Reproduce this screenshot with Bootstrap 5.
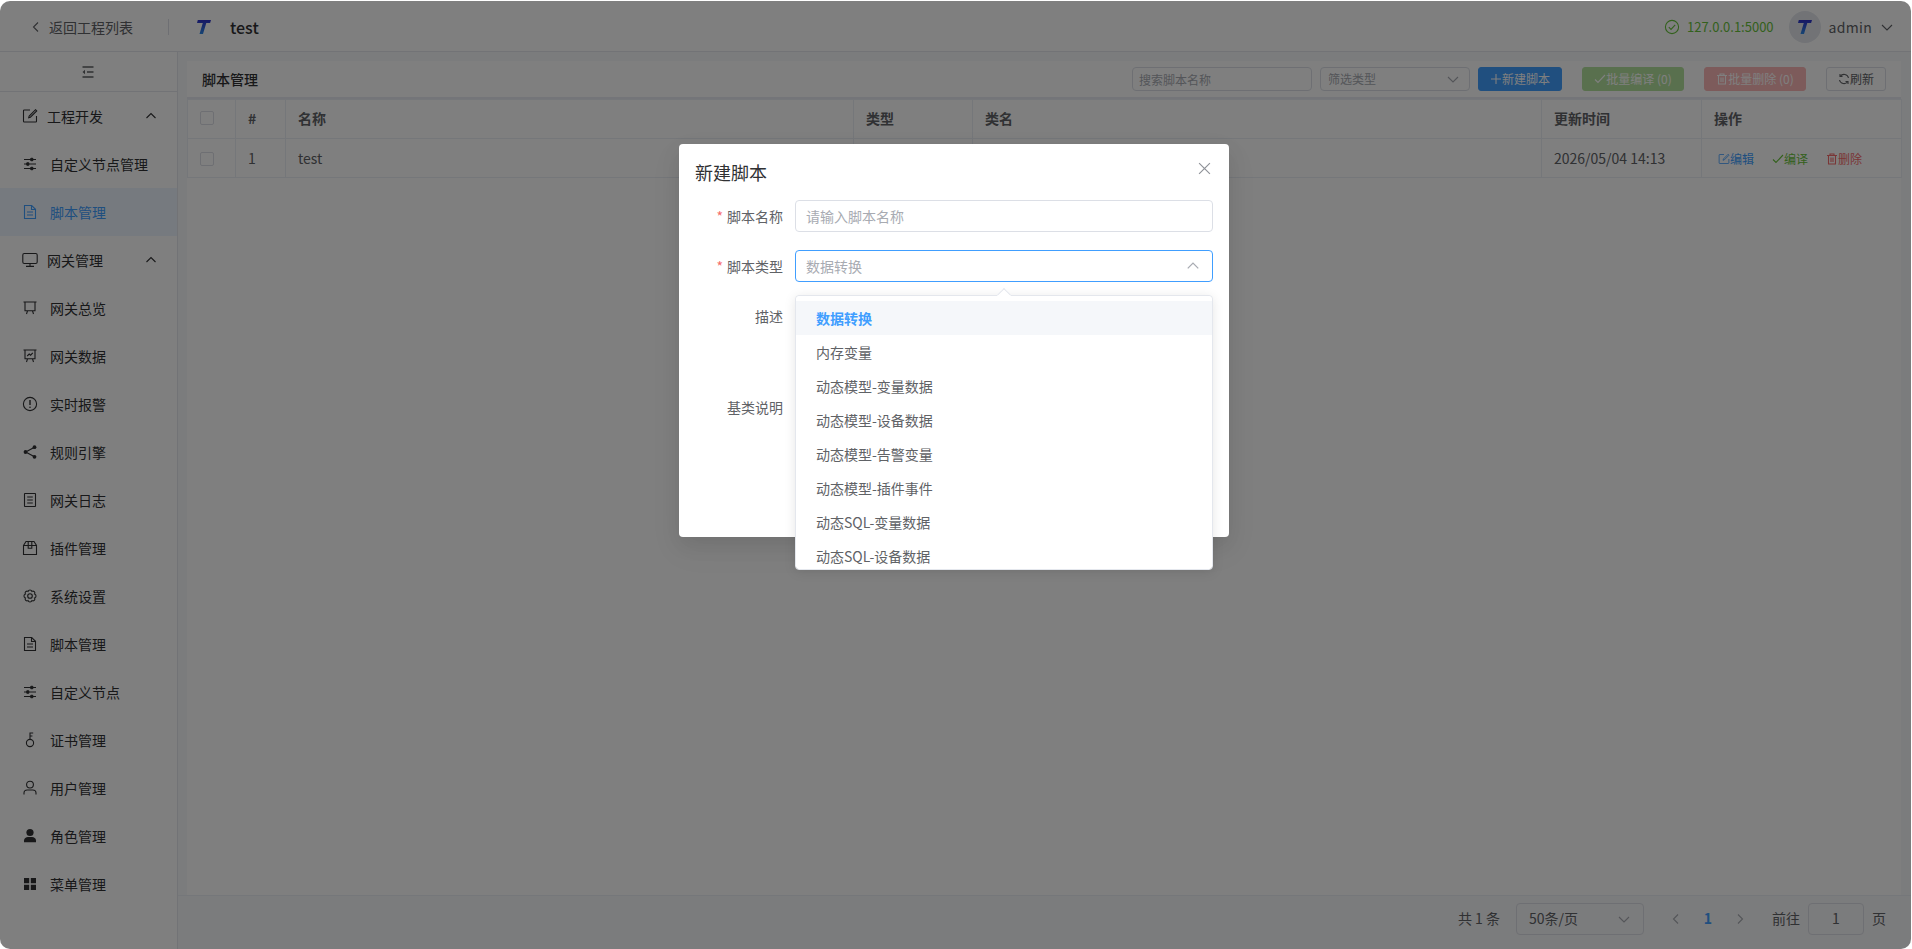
<!DOCTYPE html>
<html lang="zh-CN">
<head>
  <meta charset="UTF-8">
  <title>脚本管理</title>
  <meta name="viewport" content="width=device-width, initial-scale=1">
  <link href="https://cdn.jsdelivr.net/npm/bootstrap@5.3.6/dist/css/bootstrap.min.css" rel="stylesheet">
  <script src="https://cdn.jsdelivr.net/npm/bootstrap@5.3.6/dist/js/bootstrap.bundle.min.js"></script>
  <style>
    html, body { height: 100%; overflow: hidden; background: #fff; }
    body { font-family: "Noto Sans CJK SC", "Noto Sans", sans-serif; font-size: 14px; color: #303133; }
    svg.ico { width: 16px; height: 16px; fill: none; stroke: currentColor; stroke-width: 1.1; flex: none; }
    svg.ico.solid { fill: currentColor; stroke: none; }
    .shell { position: relative; height: 948px; margin: 1px 1px 0 0; border-radius: 10px; overflow: hidden; background: #fff; }

    .top-bar { height: 51px; flex: none; border-bottom: 1px solid #e4e7ed; padding: 2px 18px 0 30px; }
    .back-link { color: #606266; gap: 7px; }
    .back-link svg { width: 12px; height: 12px; }
    .top-sep { width: 1px; height: 16px; background: #dcdfe6; margin: 0 28px 0 35px; }
    .brand-t { width: 14px; height: 14px; margin-right: 19px; }
    .proj-name { font-size: 16px; font-weight: 500; }
    .status-ok { color: #67c23a; gap: 7px; margin-right: 15px; font-size: 13px; }
    .avatar-t { width: 32px; height: 32px; border-radius: 50%; background: #e4e7ed; margin-right: 8px; }
    .user-name { font-size: 14px; letter-spacing: .3px; color: #606266; margin-right: 9px; }
    svg.user-caret { width: 12px; height: 12px; color: #606266; }

    .side-nav { width: 178px; flex: none; border-right: 1px solid #e4e7ed; }
    .side-fold { height: 40px; border-bottom: 1px solid #e4e7ed; color: #606266; padding-right: 2px; }
    .side-item { height: 48px; padding-left: 22px; gap: 12px; }
    .side-item.grp { gap: 9px; padding-right: 20px; }
    .side-item.grp .arrow-up { width: 12px; height: 12px; margin-left: auto; }
    .side-item.on { background: #ecf5ff; color: #409eff; }

    .main-area { background: #f7f8fa; min-width: 0; }
    .work-card { margin: 9px 10px 0 9px; background: #fff; }
    .tool-row { height: 38px; padding: 0 15px; border-bottom: 2px solid #e8eaf2; }
    .tool-title { font-weight: 500; }
    .fake-input { height: 24px; font-size: 12px; padding: 0 6px; border-color: #dcdfe6; border-radius: 4px; color: #606266; }
    .fake-input::placeholder { color: #a8abb2; }
    .w-search { width: 180px; margin-right: 8px; }
    .w-type { width: 150px; margin-right: 8px; padding-left: 7px; }
    .fake-select { border: 1px solid #dcdfe6; background: #fff; color: #a8abb2; }
    .fake-select svg { width: 12px; height: 12px; margin-left: auto; margin-right: 4px; color: #a8abb2; }
    .tbtn { height: 24px; font-size: 12px; padding: 0; border-radius: 3px; display: inline-flex; align-items: center; justify-content: center; gap: 0; --bs-btn-border-width: 1px; }
    .tbtn svg { width: 12px; height: 12px; }
    .t-new { width: 84px; background: #409eff; border-color: #409eff; color: #fff; margin-right: 20px; }
    .t-comp { width: 102px; background: #b3e19d; border-color: #b3e19d; color: #fff; margin-right: 20px; }
    .t-del { width: 102px; background: #fab6b6; border-color: #fab6b6; color: #fff; margin-right: 20px; }
    .t-ref { width: 60px; background: #fff; border-color: #dcdfe6; color: #606266; }

    .script-table { table-layout: fixed; width: 1714px; margin: 0; --bs-table-border-color: #ebeef5; color: #606266; }
    .script-table th, .script-table td { height: 39px; padding: 0 12px; vertical-align: middle; color: #606266; }
    .script-table th { font-weight: 700; padding-bottom: 2px; }
    .script-table td { padding-top: 1px; }
    .c-chk { width: 48px; } .c-idx { width: 50px; } .c-name { width: 568px; } .c-type { width: 119px; }
    .c-cls { width: 569px; } .c-time { width: 160px; } .c-op { width: 200px; }
    .tick-box { width: 14px; height: 14px; border: 1px solid #dcdfe6; border-radius: 2px; background: #fff; display: block; }
    .op-links { font-size: 12px; padding-left: 4px; gap: 18px; }
    .op-links span { display: inline-flex; align-items: center; }
    .op-links svg { width: 12px; height: 12px; }
    .tx-blue { color: #409eff; } .tx-green { color: #67c23a; } .tx-red { color: #f56c6c; }

    .pager-row { height: 54px; flex: none; border-top: 1px solid #ebeef5; padding: 0 25px 8px 0; color: #606266; }
    .size-pick { width: 128px; height: 32px; border: 1px solid #dcdfe6; border-radius: 4px; margin: 0 16px; padding: 0 13px 0 12px; }
    .size-pick svg { width: 12px; height: 12px; margin-left: auto; color: #a8abb2; }
    .pg-cell { width: 32px; height: 32px; }
    .pg-cell svg { width: 12px; height: 12px; color: #a8abb2; }
    .pg-now { color: #409eff; font-weight: 700; }
    .jump-box { width: 56px; height: 32px; border: 1px solid #dcdfe6; border-radius: 4px; margin: 0 8px; }

    .mask { position: absolute; inset: 0; background: rgba(0,0,0,.5); padding: 143px 3px 0 0; }
    .dlg { width: 550px; height: 393px; margin: 0 auto; background: #fff; border: 0; border-radius: 4px; box-shadow: 0 12px 32px 4px rgba(0,0,0,.04), 0 8px 20px rgba(0,0,0,.08); padding: 0 16px 0 17px; position: relative; }
    .dlg-title { font-size: 18px; color: #303133; height: 56px; line-height: 56px; margin-left: -1px; }
    svg.dlg-x { position: absolute; top: 18px; right: 18px; width: 13px; height: 13px; color: #909399; }
    .frow { margin-bottom: 18px; }
    .flabel { width: 87px; margin-right: 12px; flex: none; text-align: right; color: #606266; line-height: 32px; }
    .flabel i { color: #f56c6c; font-style: normal; margin-right: 4px; }
    .fbox { height: 32px; width: 418px; font-size: 14px; padding: 0 10px; border-color: #dcdfe6; border-radius: 4px; color: #a8abb2; }
    .fbox::placeholder { color: #a8abb2; }
    .fbox.open { border: 1px solid #409eff; position: relative; }
    .fbox.open > svg { width: 14px; height: 14px; margin-left: auto; margin-right: 2px; color: #a8abb2; }
    .ftext { height: 73px; width: 418px; border-color: #dcdfe6; }
    .pop-list { position: absolute; left: -1px; right: -1px; top: 44px; height: 275px; display: block; padding: 0; min-width: 0; border: 1px solid #e4e7ed; border-radius: 4px; box-shadow: 0 2px 12px rgba(0,0,0,.1); z-index: 5; }
    .pop-list::before { content: ""; position: absolute; top: -6px; left: 203px; width: 10px; height: 10px; background: #fff; border: 1px solid #e4e7ed; border-right-color: transparent; border-bottom-color: transparent; transform: rotate(45deg); }
    .pop-scroll { height: 100%; overflow: hidden; padding-top: 5px; position: relative; border-radius: 4px; background: #fff; }
    .pop-scroll .dropdown-item { height: 34px; line-height: 34px; padding: 0 20px; font-size: 14px; color: #606266; }
    .pop-scroll .dropdown-item.active { background: #f5f7fa; color: #409eff; font-weight: 700; }
  </style>
</head>
<body>

<svg width="0" height="0" class="position-absolute">
  <defs>
    <linearGradient id="tGrad" x1="0" y1="0" x2="0" y2="1">
      <stop offset="0" stop-color="#2f2fc8"/>
      <stop offset="1" stop-color="#2f8be8"/>
    </linearGradient>
  </defs>
  <symbol id="i-t" viewBox="0 0 14 14"><path d="M.8 0H14l-.9 3H9.3L6 14H2.5L5.8 3H0z" fill="url(#tGrad)" stroke="none"/></symbol>
  <symbol id="i-left" viewBox="0 0 12 12"><path d="M8 1.500 3.500 6 8 10.500"/></symbol>
  <symbol id="i-right" viewBox="0 0 12 12"><path d="M4 1.500 8.500 6 4 10.500"/></symbol>
  <symbol id="i-up" viewBox="0 0 12 12"><path d="M1.500 8 6 3.500 10.500 8"/></symbol>
  <symbol id="i-down" viewBox="0 0 12 12"><path d="M1 4 6 9l5-5"/></symbol>
  <symbol id="i-fold" viewBox="0 0 16 16"><path d="M2.500 3h11M7 8h6.500M2.500 13h11" stroke-width="1.600"/><path d="M5 5.800 2.500 8 5 10.200z" fill="currentColor" stroke="none"/></symbol>
  <symbol id="i-edit" viewBox="0 0 16 16"><path d="M8 2H2.200a.7.7 0 0 0-.7.7v10.600c0 .4.3.7.7.7h11.600c.4 0 .7-.3.7-.7V8"/><path d="m13.500 1.700 1.200 1.200-6.300 6.300-1.700.5.5-1.700z"/></symbol>
  <symbol id="i-ops" viewBox="0 0 16 16"><path d="M2 3.500h12M2 8h12M2 12.500h12"/><rect x="8.800" y="2.200" width="2" height="2.600" rx=".6" fill="currentColor"/><rect x="4.800" y="6.700" width="2" height="2.600" rx=".6" fill="currentColor"/><rect x="8.800" y="11.200" width="2" height="2.600" rx=".6" fill="currentColor"/></symbol>
  <symbol id="i-doc" viewBox="0 0 16 16"><path d="M2.500 1.500h7.200l3.800 3.800v9.200h-11z"/><path d="M9.500 1.500v4h4M5 8h6M5 11h6"/></symbol>
  <symbol id="i-mon" viewBox="0 0 16 16"><rect x=".8" y="1.500" width="14.400" height="10" rx="1.500"/><path d="M8 11.500v2.700M4 14.400h8"/></symbol>
  <symbol id="i-board" viewBox="0 0 16 16"><path d="M1.500 2h13M3 2v8.800h10V2M5.500 10.800 4.500 14M10.500 10.800l1 3.200"/></symbol>
  <symbol id="i-line" viewBox="0 0 16 16"><path d="M1.500 2h13M3 2v8.800h10V2M5.500 10.800 4.500 14M10.500 10.800l1 3.200M5.200 8l2-2 1.400 1.200 2.200-2.400"/></symbol>
  <symbol id="i-warn" viewBox="0 0 16 16"><circle cx="8" cy="8" r="6.600"/><path d="M8 4v5" stroke-width="1.400"/><circle cx="8" cy="11.300" r=".8" fill="currentColor" stroke="none"/></symbol>
  <symbol id="i-share" viewBox="0 0 16 16"><path d="m12.500 3.200-8.800 4.800 8.800 4.800" stroke-width="1.200"/><circle cx="12.500" cy="3.200" r="1.900" fill="currentColor" stroke="none"/><circle cx="3.500" cy="8" r="1.900" fill="currentColor" stroke="none"/><circle cx="12.500" cy="12.800" r="1.900" fill="currentColor" stroke="none"/></symbol>
  <symbol id="i-log" viewBox="0 0 16 16"><rect x="2.500" y="1.500" width="11" height="13" rx=".4"/><path d="M5.200 5h5.600M5.200 8h5.600M5.200 11h5.600"/></symbol>
  <symbol id="i-box" viewBox="0 0 16 16"><path d="M1.500 5.500 4 1.500h8l2.500 4v9h-13zM1.500 5.500h13"/><path d="M6.200 1.500v6.800h3.600V1.500"/></symbol>
  <symbol id="i-gear" viewBox="0 0 16 16"><path d="M12.620 6.090A2 2 0 0 1 12.620 9.910 2 2 0 0 1 9.910 12.620 2 2 0 0 1 6.090 12.620 2 2 0 0 1 3.380 9.910 2 2 0 0 1 3.380 6.090 2 2 0 0 1 6.090 3.380 2 2 0 0 1 9.910 3.380 2 2 0 0 1 12.620 6.090z"/><circle cx="8" cy="8" r="2.300"/></symbol>
  <symbol id="i-key" viewBox="0 0 16 16"><circle cx="8" cy="11" r="3.600"/><path d="M8 7.400V1h3.200M8 4h2.400"/></symbol>
  <symbol id="i-user" viewBox="0 0 16 16"><circle cx="8" cy="4.600" r="3.400"/><path d="M2 14.500V13c0-2 1.500-3 3.200-3h5.600c1.700 0 3.200 1 3.200 3v1.500"/></symbol>
  <symbol id="i-role" viewBox="0 0 16 16"><circle cx="8" cy="4.500" r="3.600"/><path d="M2 14.200v-1.700c0-2 2-3.500 4-3.500h4c2 0 4 1.500 4 3.500v1.700z"/></symbol>
  <symbol id="i-menu" viewBox="0 0 16 16"><path d="M2 2h5.200v5.200H2zM8.800 2H14v5.200H8.800zM2 8.800h5.200V14H2zM8.800 8.800H14V14H8.800z"/></symbol>
  <symbol id="i-ok" viewBox="0 0 16 16"><circle cx="8" cy="8" r="6.600"/><path d="m4.800 8.200 2.200 2.200 4.200-4.600"/></symbol>
  <symbol id="i-plus" viewBox="0 0 12 12"><path d="M6 1v10M1 6h10"/></symbol>
  <symbol id="i-check" viewBox="0 0 12 12"><path d="m1 6.500 3 3 7-7.500"/></symbol>
  <symbol id="i-trash" viewBox="0 0 12 12"><path d="M1 2.500h10M2.500 2.500V11h7V2.500M4 2.500V1h4v1.500M5 4.500v4.500M7 4.500v4.500"/></symbol>
  <symbol id="i-refresh" viewBox="0 0 12 12"><path d="M10.500 5A4.600 4.600 0 0 0 2.300 3.300M1.500 7a4.600 4.600 0 0 0 8.200 1.700"/><path d="M2 1v2.500h2.500M10 11V8.500H7.500"/></symbol>
  <symbol id="i-x" viewBox="0 0 12 12"><path d="m1 1 10 10M11 1 1 11"/></symbol>
</svg>

<div class="shell d-flex flex-column">

  <!-- 顶栏 -->
  <header class="top-bar d-flex align-items-center">
    <div class="back-link d-flex align-items-center">
      <svg class="ico"><use href="#i-left"/></svg><span>返回工程列表</span>
    </div>
    <div class="top-sep"></div>
    <svg class="brand-t"><use href="#i-t"/></svg>
    <span class="proj-name">test</span>
    <div class="status-ok d-flex align-items-center ms-auto">
      <svg class="ico"><use href="#i-ok"/></svg><span>127.0.0.1:5000</span>
    </div>
    <div class="avatar-t d-flex align-items-center justify-content-center">
      <svg class="brand-t m-0"><use href="#i-t"/></svg>
    </div>
    <span class="user-name">admin</span>
    <svg class="ico user-caret"><use href="#i-down"/></svg>
  </header>

  <div class="d-flex flex-grow-1 overflow-hidden">
    <!-- 侧边栏 -->
    <aside class="side-nav">
      <div class="side-fold d-flex align-items-center justify-content-center"><svg class="ico"><use href="#i-fold"/></svg></div>
      <div class="side-item grp d-flex align-items-center"><svg class="ico"><use href="#i-edit"/></svg><span>工程开发</span><svg class="ico arrow-up"><use href="#i-up"/></svg></div>
      <div class="side-item d-flex align-items-center"><svg class="ico"><use href="#i-ops"/></svg><span>自定义节点管理</span></div>
      <div class="side-item on d-flex align-items-center"><svg class="ico"><use href="#i-doc"/></svg><span>脚本管理</span></div>
      <div class="side-item grp d-flex align-items-center"><svg class="ico"><use href="#i-mon"/></svg><span>网关管理</span><svg class="ico arrow-up"><use href="#i-up"/></svg></div>
      <div class="side-item d-flex align-items-center"><svg class="ico"><use href="#i-board"/></svg><span>网关总览</span></div>
      <div class="side-item d-flex align-items-center"><svg class="ico"><use href="#i-line"/></svg><span>网关数据</span></div>
      <div class="side-item d-flex align-items-center"><svg class="ico"><use href="#i-warn"/></svg><span>实时报警</span></div>
      <div class="side-item d-flex align-items-center"><svg class="ico"><use href="#i-share"/></svg><span>规则引擎</span></div>
      <div class="side-item d-flex align-items-center"><svg class="ico"><use href="#i-log"/></svg><span>网关日志</span></div>
      <div class="side-item d-flex align-items-center"><svg class="ico"><use href="#i-box"/></svg><span>插件管理</span></div>
      <div class="side-item d-flex align-items-center"><svg class="ico"><use href="#i-gear"/></svg><span>系统设置</span></div>
      <div class="side-item d-flex align-items-center"><svg class="ico"><use href="#i-doc"/></svg><span>脚本管理</span></div>
      <div class="side-item d-flex align-items-center"><svg class="ico"><use href="#i-ops"/></svg><span>自定义节点</span></div>
      <div class="side-item d-flex align-items-center"><svg class="ico"><use href="#i-key"/></svg><span>证书管理</span></div>
      <div class="side-item d-flex align-items-center"><svg class="ico"><use href="#i-user"/></svg><span>用户管理</span></div>
      <div class="side-item d-flex align-items-center"><svg class="ico solid"><use href="#i-role"/></svg><span>角色管理</span></div>
      <div class="side-item d-flex align-items-center"><svg class="ico solid"><use href="#i-menu"/></svg><span>菜单管理</span></div>
    </aside>

    <!-- 主区域 -->
    <main class="main-area flex-grow-1 d-flex flex-column">
      <div class="work-card flex-grow-1 d-flex flex-column">
        <div class="tool-row d-flex align-items-center">
          <span class="tool-title me-auto">脚本管理</span>
          <input class="form-control fake-input w-search" placeholder="搜索脚本名称">
          <div class="fake-input fake-select w-type d-flex align-items-center"><span>筛选类型</span><svg class="ico"><use href="#i-down"/></svg></div>
          <button class="btn tbtn t-new"><svg class="ico"><use href="#i-plus"/></svg>新建脚本</button>
          <button class="btn tbtn t-comp"><svg class="ico"><use href="#i-check"/></svg>批量编译 (0)</button>
          <button class="btn tbtn t-del"><svg class="ico"><use href="#i-trash"/></svg>批量删除 (0)</button>
          <button class="btn tbtn t-ref"><svg class="ico"><use href="#i-refresh"/></svg>刷新</button>
        </div>
        <table class="table table-bordered script-table">
          <thead>
            <tr>
              <th class="c-chk"><span class="tick-box"></span></th>
              <th class="c-idx">#</th>
              <th class="c-name">名称</th>
              <th class="c-type">类型</th>
              <th class="c-cls">类名</th>
              <th class="c-time">更新时间</th>
              <th class="c-op">操作</th>
            </tr>
          </thead>
          <tbody>
            <tr>
              <td><span class="tick-box"></span></td>
              <td>1</td>
              <td>test</td>
              <td></td>
              <td></td>
              <td>2026/05/04 14:13</td>
              <td>
                <div class="op-links d-flex align-items-center">
                  <span class="tx-blue"><svg class="ico"><use href="#i-edit"/></svg>编辑</span>
                  <span class="tx-green"><svg class="ico"><use href="#i-check"/></svg>编译</span>
                  <span class="tx-red"><svg class="ico"><use href="#i-trash"/></svg>删除</span>
                </div>
              </td>
            </tr>
          </tbody>
        </table>
      </div>
      <div class="pager-row d-flex align-items-center justify-content-end">
        <span>共 1 条</span>
        <div class="size-pick d-flex align-items-center"><span>50条/页</span><svg class="ico"><use href="#i-down"/></svg></div>
        <div class="pg-cell d-flex align-items-center justify-content-center"><svg class="ico"><use href="#i-left"/></svg></div>
        <div class="pg-cell pg-now d-flex align-items-center justify-content-center">1</div>
        <div class="pg-cell d-flex align-items-center justify-content-center"><svg class="ico"><use href="#i-right"/></svg></div>
        <span class="ms-3">前往</span>
        <div class="jump-box d-flex align-items-center justify-content-center">1</div>
        <span>页</span>
      </div>
    </main>
  </div>

  <!-- 遮罩与弹窗 -->
  <div class="mask">
    <div class="modal-content dlg">
      <div class="dlg-title">新建脚本</div>
      <svg class="ico dlg-x"><use href="#i-x"/></svg>
      <div class="frow d-flex">
        <div class="flabel"><i>*</i>脚本名称</div>
        <input class="form-control fbox" placeholder="请输入脚本名称">
      </div>
      <div class="frow d-flex">
        <div class="flabel"><i>*</i>脚本类型</div>
        <div class="form-control fbox open d-flex align-items-center">
          <span>数据转换</span><svg class="ico"><use href="#i-up"/></svg>
          <div class="dropdown-menu pop-list">
            <div class="pop-scroll">
              <div class="dropdown-item active">数据转换</div>
              <div class="dropdown-item">内存变量</div>
              <div class="dropdown-item">动态模型-变量数据</div>
              <div class="dropdown-item">动态模型-设备数据</div>
              <div class="dropdown-item">动态模型-告警变量</div>
              <div class="dropdown-item">动态模型-插件事件</div>
              <div class="dropdown-item">动态SQL-变量数据</div>
              <div class="dropdown-item">动态SQL-设备数据</div>
            </div>
          </div>
        </div>
      </div>
      <div class="frow d-flex">
        <div class="flabel">描述</div>
        <textarea class="form-control ftext"></textarea>
      </div>
      <div class="frow d-flex">
        <div class="flabel">基类说明</div>
      </div>
    </div>
  </div>
</div>

</body>
</html>
